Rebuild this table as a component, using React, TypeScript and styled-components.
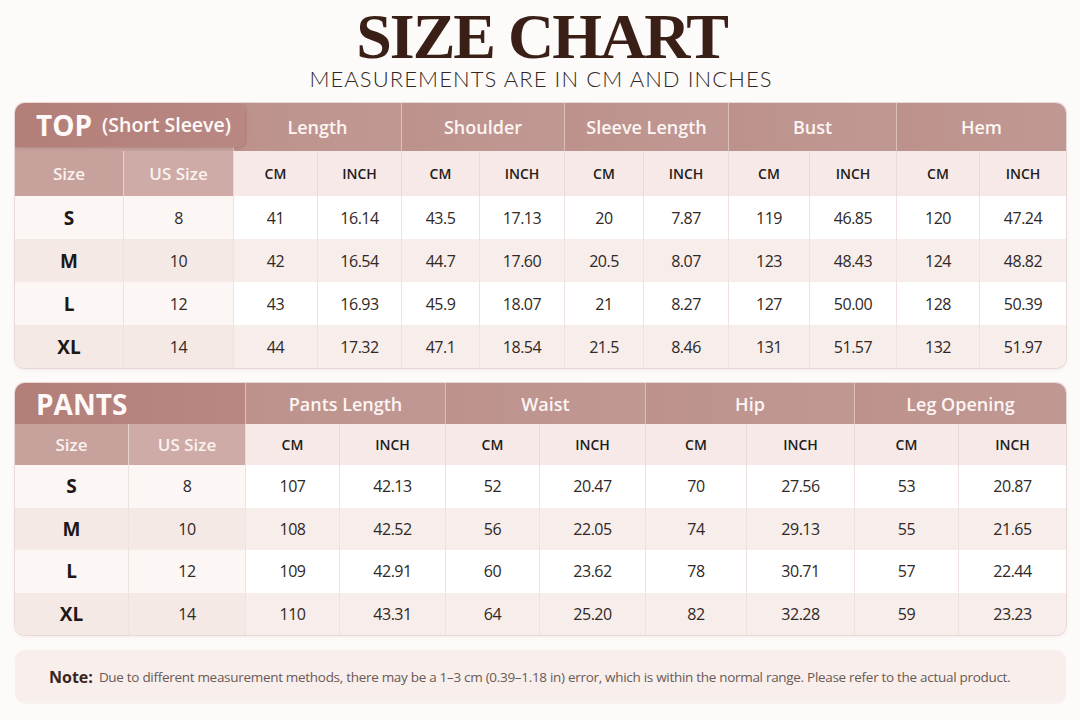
import React from 'react';
import styled, { createGlobalStyle } from 'styled-components';

const GlobalStyle = createGlobalStyle`
  html, body { margin: 0; padding: 0; background: #fdfbfa; }
  body { font-family: "Open Sans", "Noto Sans", sans-serif; color: #2b2522; }
  * { box-sizing: border-box; }
`;

const Page = styled.div`
  width: 1080px;
  height: 720px;
  padding: 7px 14px 0 15px;
  display: flex;
  flex-direction: column;
`;

const Heading = styled.header`
  display: flex;
  flex-direction: column;
  align-items: center;
  margin-bottom: 13px;
`;

const Title = styled.h1`
  margin: 0;
  padding-left: 2px;
  font-family: "Liberation Serif", "Times New Roman", serif;
  font-weight: 700;
  font-size: 64px;
  line-height: 60px;
  letter-spacing: -2px;
  color: #3a1f17;
`;

const Subtitle = styled.p`
  margin: 1px 0 0;
  padding-left: 1.1px;
  font-family: Lato, "Open Sans", sans-serif;
  font-weight: 300;
  font-size: 22px;
  line-height: 22px;
  letter-spacing: 1.1px;
  color: #2d2624;
`;

const Table = styled.div<{ $cols: string; $rows: string }>`
  display: grid;
  grid-template-columns: ${(p) => p.$cols};
  grid-template-rows: ${(p) => p.$rows};
  border-radius: 10px;
  overflow: hidden;
  background: #fff;
  box-shadow: 0 0 0 1px #e8d9d6, 0 2px 4px rgba(120, 80, 70, 0.1);
  & + & {
    margin-top: 15px;
  }
`;

const TitleCell = styled.div`
  grid-column: span 2;
  position: relative;
  z-index: 2;
  background: #c7a29c;
`;

const Tab = styled.div<{ $extend: number; $h: string }>`
  position: absolute;
  left: 0;
  top: 0;
  width: calc(100% + ${(p) => p.$extend}px);
  height: ${(p) => p.$h};
  display: flex;
  align-items: center;
  padding-left: 21px;
  border-radius: 0 ${(p) => (p.$extend ? '8px 8px' : '0 0')} 0;
  background: linear-gradient(90deg, #b27e78 0%, #b98883 100%);
  box-shadow: ${(p) => (p.$extend ? '1px 1px 3px rgba(90, 50, 45, 0.25)' : 'none')};
  color: #fffaf9;
`;

const TabMain = styled.span`
  font-weight: 700;
  font-size: 28px;
  line-height: 1;
`;

const TabSub = styled.span`
  margin-left: 10px;
  font-weight: 600;
  font-size: 19.5px;
  line-height: 1;
`;

const GroupHead = styled.div`
  grid-column: span 2;
  display: flex;
  align-items: center;
  justify-content: center;
  background: linear-gradient(90deg, #bd928c 0%, #c09893 100%);
  border-left: 1px solid rgba(255, 240, 238, 0.45);
  color: #fdf5f3;
  font-weight: 600;
  font-size: 18px;
`;

const LabelHead = styled.div<{ $tone: 'a' | 'b' }>`
  display: flex;
  align-items: center;
  justify-content: center;
  background: ${(p) => (p.$tone === 'a' ? '#c7a19b' : '#ceaba6')};
  border-left: ${(p) => (p.$tone === 'b' ? '1px solid rgba(255,245,243,0.55)' : 'none')};
  color: #fbf2f0;
  font-weight: 600;
  font-size: 17px;
`;

const UnitHead = styled.div`
  display: flex;
  align-items: center;
  justify-content: center;
  background: #f6e9e7;
  border-left: 1px solid #ead9d6;
  color: #221c1a;
  font-weight: 600;
  font-size: 14px;
`;

const Cell = styled.div<{ $shade: boolean; $lead?: boolean; $first?: boolean }>`
  display: flex;
  align-items: center;
  justify-content: center;
  background: ${(p) =>
    p.$shade ? (p.$lead ? '#f5e9e6' : '#f7edea') : p.$lead ? '#fcf6f4' : '#ffffff'};
  border-left: ${(p) => (p.$first ? 'none' : '1px solid #eee2df')};
  color: #2f2826;
  font-size: 16px;
  letter-spacing: -0.5px;
`;

const SizeCell = styled(Cell)`
  color: #1d1816;
  font-weight: 700;
  font-size: 19px;
  letter-spacing: 0;
`;

const Note = styled.div`
  margin-top: 15px;
  height: 53px;
  display: flex;
  align-items: center;
  padding-left: 34px;
  border-radius: 10px;
  background: #f8eeec;
  box-shadow: 0 1px 2px rgba(120, 80, 70, 0.06);
`;

const NoteLabel = styled.strong`
  font-weight: 700;
  font-size: 16px;
  color: #3a2520;
  margin-right: 6px;
`;

const NoteText = styled.span`
  font-size: 13.5px;
  letter-spacing: -0.3px;
  color: #6b5a55;
`;

type ChartProps = {
  cols: string;
  rows: string;
  tab: React.ReactNode;
  tabExtend: number;
  tabHeight: string;
  groups: string[];
  data: string[][];
};

const Chart: React.FC<ChartProps> = ({ cols, rows, tab, tabExtend, tabHeight, groups, data }) => (
  <Table $cols={cols} $rows={rows}>
    <TitleCell>
      <Tab $extend={tabExtend} $h={tabHeight}>
        {tab}
      </Tab>
    </TitleCell>
    {groups.map((g) => (
      <GroupHead key={g}>{g}</GroupHead>
    ))}
    <LabelHead $tone="a">Size</LabelHead>
    <LabelHead $tone="b">US Size</LabelHead>
    {groups.map((g) => (
      <React.Fragment key={g}>
        <UnitHead>CM</UnitHead>
        <UnitHead>INCH</UnitHead>
      </React.Fragment>
    ))}
    {data.map((row, ri) => {
      const shade = ri % 2 === 1;
      return (
        <React.Fragment key={row[0]}>
          <SizeCell $shade={shade} $lead $first>
            {row[0]}
          </SizeCell>
          {row.slice(1).map((v, ci) => (
            <Cell key={ci} $shade={shade} $lead={ci === 0}>
              {v}
            </Cell>
          ))}
        </React.Fragment>
      );
    })}
  </Table>
);

const topData = [
  ['S', '8', '41', '16.14', '43.5', '17.13', '20', '7.87', '119', '46.85', '120', '47.24'],
  ['M', '10', '42', '16.54', '44.7', '17.60', '20.5', '8.07', '123', '48.43', '124', '48.82'],
  ['L', '12', '43', '16.93', '45.9', '18.07', '21', '8.27', '127', '50.00', '128', '50.39'],
  ['XL', '14', '44', '17.32', '47.1', '18.54', '21.5', '8.46', '131', '51.57', '132', '51.97'],
];

const pantsData = [
  ['S', '8', '107', '42.13', '52', '20.47', '70', '27.56', '53', '20.87'],
  ['M', '10', '108', '42.52', '56', '22.05', '74', '29.13', '55', '21.65'],
  ['L', '12', '109', '42.91', '60', '23.62', '78', '30.71', '57', '22.44'],
  ['XL', '14', '110', '43.31', '64', '25.20', '82', '32.28', '59', '23.23'],
];

export default function App() {
  return (
    <>
      <GlobalStyle />
      <Page>
        <Heading>
          <Title>SIZE CHART</Title>
          <Subtitle>MEASUREMENTS ARE IN CM AND INCHES</Subtitle>
        </Heading>
        <Chart
          cols="108px 110px 84px 84px 78px 85px 79px 85px 81px 87px 83px 87px"
          rows="48px 45px 43px 43px 43px 43px"
          tabExtend={12}
          tabHeight="44px"
          tab={
            <>
              <TabMain>TOP</TabMain>
              <TabSub>(Short Sleeve)</TabSub>
            </>
          }
          groups={['Length', 'Shoulder', 'Sleeve Length', 'Bust', 'Hem']}
          data={topData}
        />
        <Chart
          cols="113px 117px 94px 106px 94px 106px 101px 108px 104px 108px"
          rows="41px 41px 42.5px 42.5px 42.5px 42.5px"
          tabExtend={0}
          tabHeight="100%"
          tab={<TabMain>PANTS</TabMain>}
          groups={['Pants Length', 'Waist', 'Hip', 'Leg Opening']}
          data={pantsData}
        />
        <Note>
          <NoteLabel>Note:</NoteLabel>
          <NoteText>
            Due to different measurement methods, there may be a 1–3 cm (0.39–1.18 in) error, which is within the
            normal range. Please refer to the actual product.
          </NoteText>
        </Note>
      </Page>
    </>
  );
}
